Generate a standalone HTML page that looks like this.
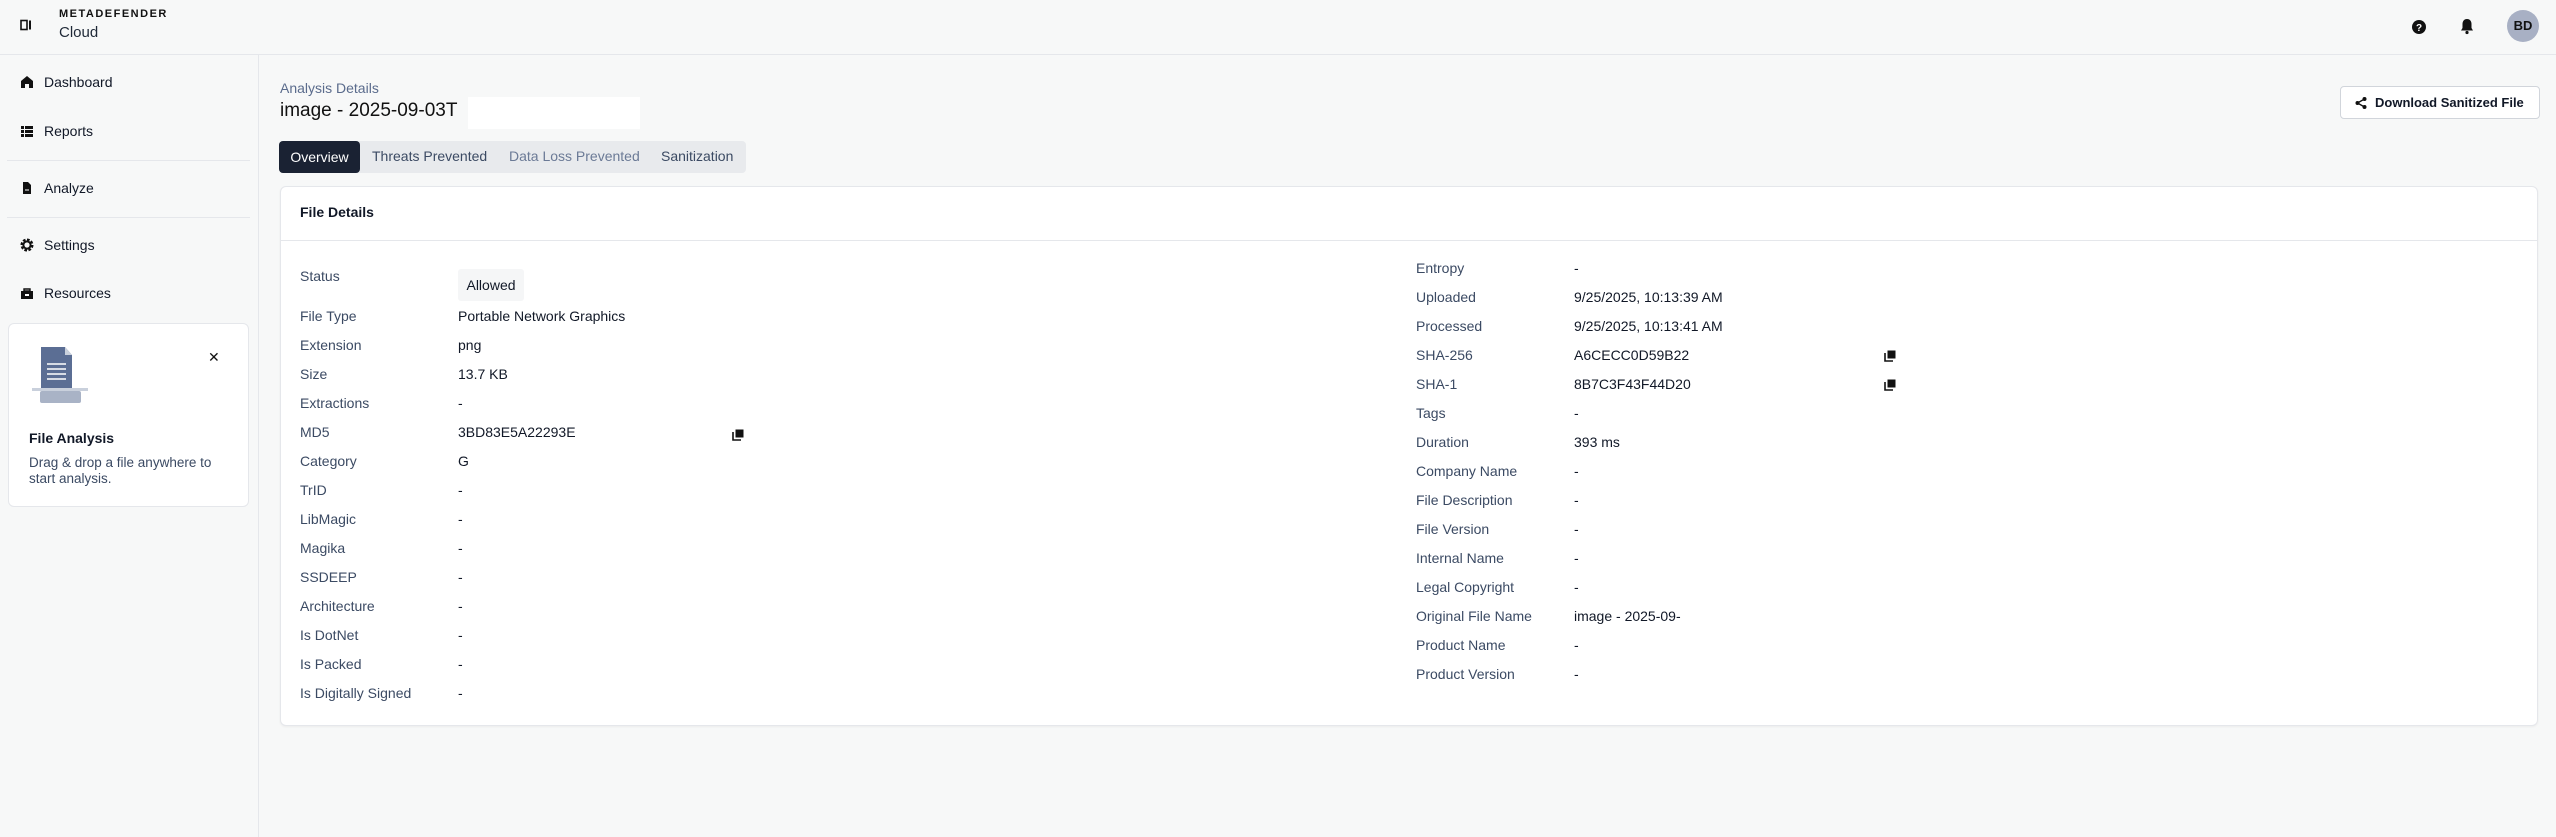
<!DOCTYPE html>
<html><head><meta charset="utf-8"><style>
*{box-sizing:border-box;margin:0;padding:0}
body{width:2556px;height:837px;background:#f7f8f8;font-family:"Liberation Sans",sans-serif;color:#111827;position:relative;overflow:hidden;font-size:14px}
.a{position:absolute}
.hdr{left:0;top:0;width:2556px;height:55px;border-bottom:1px solid #e5e7eb}
.side{left:0;top:55px;width:259px;height:782px;border-right:1px solid #e5e7eb}
.nav{left:20px;font-size:14px;color:#111827;display:flex;align-items:center;gap:10px}
.nav svg{width:14px;height:14px}
.div{left:7px;width:243px;height:1px;background:#e5e7eb}
.lbl{color:#3b4a63}
.val{color:#111827}
.card{left:280px;top:186px;width:2258px;height:540px;background:#fff;border:1px solid #e5e7eb;border-radius:6px;box-shadow:0 1px 2px rgba(0,0,0,.05)}
</style></head><body>
<div class="a hdr"></div>
<svg class="a" style="left:20px;top:19px" width="12" height="12" viewBox="0 0 12 12"><rect x="1" y="1.5" width="6" height="9" fill="none" stroke="#111" stroke-width="1.6"/><rect x="9" y="1.5" width="2" height="9" fill="#111"/></svg>
<div class="a" style="left:59px;top:8px;font-size:11px;font-weight:bold;letter-spacing:1.5px;color:#111">METADEFENDER</div>
<div class="a" style="left:59px;top:24px;font-size:15px;color:#1f2937">Cloud</div>
<svg class="a" style="left:2411px;top:19px" width="16" height="16" viewBox="0 0 16 16"><circle cx="8" cy="8" r="7" fill="#111"/><text x="8" y="12" font-size="10" font-weight="bold" text-anchor="middle" fill="#fff" font-family="Liberation Sans">?</text></svg>
<svg class="a" style="left:2459px;top:18px" width="16" height="17" viewBox="0 0 16 17"><path d="M8 1c-3 0-4.5 2.3-4.5 5v4L2 12.5h12L12.5 10V6C12.5 3.3 11 1 8 1z" fill="#111"/><circle cx="8" cy="14.5" r="1.6" fill="#111"/></svg>
<div class="a" style="left:2507px;top:10px;width:32px;height:32px;border-radius:50%;background:#a8b0c4;font-size:13px;font-weight:bold;color:#111;text-align:center;line-height:32px">BD</div>

<div class="a side"></div>
<div class="a nav" style="top:74px"><svg viewBox="0 0 14 14"><path d="M7 1L1 6v7h4V9h4v4h4V6z" fill="#111"/></svg>Dashboard</div>
<div class="a nav" style="top:123px"><svg viewBox="0 0 14 14"><path d="M1 2h3v3H1zM5 2h8v3H5zM1 6h3v3H1zM5 6h8v3H5zM1 10h3v3H1zM5 10h8v3H5z" fill="#111"/></svg>Reports</div>
<div class="a div" style="top:160px"></div>
<div class="a nav" style="top:180px"><svg viewBox="0 0 14 14"><path d="M3 1h5l3 3v9H3z" fill="#111"/><path d="M5 9h4" stroke="#fff"/></svg>Analyze</div>
<div class="a div" style="top:217px"></div>
<div class="a nav" style="top:237px"><svg viewBox="0 0 14 14"><circle cx="7" cy="7" r="5" fill="none" stroke="#111" stroke-width="3" stroke-dasharray="2.5 1.4"/><circle cx="7" cy="7" r="3.6" fill="none" stroke="#111" stroke-width="2"/></svg>Settings</div>
<div class="a nav" style="top:285px"><svg viewBox="0 0 14 14"><path d="M4 3h6v2H4z" fill="none" stroke="#111" stroke-width="1.4"/><rect x="1" y="5" width="12" height="8" fill="#111"/><rect x="5" y="8" width="4" height="2" fill="#fff"/></svg>Resources</div>

<div class="a" style="left:8px;top:323px;width:241px;height:184px;background:#fff;border:1px solid #e5e7eb;border-radius:6px"></div>
<svg class="a" style="left:32px;top:347px" width="56" height="56" viewBox="0 0 56 56"><path d="M9 0h24l7 8v33H9z" fill="#5b6e94"/><path d="M33 0l7 8h-7z" fill="#c9d0dc"/><path d="M15 17h19M15 22h19M15 27h19M15 32h19" stroke="#fff" stroke-width="1.6"/><rect x="0" y="41" width="56" height="3" fill="#c9d0dc"/><rect x="8" y="44" width="41" height="12" rx="2" fill="#a9b3c6"/></svg>
<div class="a" style="left:208px;top:349px;font-size:14px;color:#111">✕</div>
<div class="a" style="left:29px;top:430px;font-size:14px;font-weight:bold">File Analysis</div>
<div class="a" style="left:29px;top:455px;font-size:13.5px;color:#3b4a63;line-height:16px">Drag &amp; drop a file anywhere to<br>start analysis.</div>

<div class="a" style="left:280px;top:80px;font-size:14px;color:#5a6b8c">Analysis Details</div>
<div class="a" style="left:280px;top:100px;font-size:19px;font-weight:500;color:#111">image - 2025-09-03T</div>
<div class="a" style="left:468px;top:97px;width:172px;height:32px;background:#fff"></div>
<div class="a" style="left:2340px;top:86px;width:200px;height:33px;border:1px solid #d1d5db;border-radius:4px;background:#fff;font-size:13px;font-weight:bold;display:flex;align-items:center;padding-left:14px;gap:8px;white-space:nowrap"><svg width="12" height="12" viewBox="0 0 12 12"><circle cx="2.5" cy="6" r="2" fill="#111"/><circle cx="9.5" cy="2" r="2" fill="#111"/><circle cx="9.5" cy="10" r="2" fill="#111"/><path d="M2.5 6L9.5 2M2.5 6l7 4" stroke="#111" stroke-width="1.3"/></svg>Download Sanitized File</div>

<div class="a" style="left:279px;top:141px;width:467px;height:32px;background:#e8eaed;border-radius:4px"></div>
<div class="a" style="left:279px;top:141px;width:81px;height:32px;background:#1a2233;border-radius:4px;color:#fff;font-size:14px;text-align:center;line-height:32px">Overview</div>
<div class="a" style="left:372px;top:148px;font-size:14px;color:#3b4a63">Threats Prevented</div>
<div class="a" style="left:509px;top:148px;font-size:14px;color:#6b7a96">Data Loss Prevented</div>
<div class="a" style="left:661px;top:148px;font-size:14px;color:#3b4a63">Sanitization</div>

<div class="a card"></div>
<div class="a" style="left:280px;top:240px;width:2258px;height:1px;background:#e5e7eb"></div>
<div class="a" style="left:300px;top:204px;font-size:14px;font-weight:bold">File Details</div>

<div class="a lbl" style="left:300px;top:268px">Status</div>
<div class="a" style="left:458px;top:269px;width:66px;height:32px;background:#f5f6f7;border-radius:3px;text-align:center;line-height:32px">Allowed</div>
<div class="a lbl" style="left:300px;top:302px;line-height:29px">File Type<br>Extension<br>Size<br>Extractions<br>MD5<br>Category<br>TrID<br>LibMagic<br>Magika<br>SSDEEP<br>Architecture<br>Is DotNet<br>Is Packed<br>Is Digitally Signed</div>
<div class="a val" style="left:458px;top:302px;line-height:29px">Portable Network Graphics<br>png<br>13.7 KB<br>-<br>3BD83E5A22293E<br>G<br>-<br>-<br>-<br>-<br>-<br>-<br>-<br>-</div>

<div class="a lbl" style="left:1416px;top:254px;line-height:29px">Entropy<br>Uploaded<br>Processed<br>SHA-256<br>SHA-1<br>Tags<br>Duration<br>Company Name<br>File Description<br>File Version<br>Internal Name<br>Legal Copyright<br>Original File Name<br>Product Name<br>Product Version</div>
<div class="a val" style="left:1574px;top:254px;line-height:29px">-<br>9/25/2025, 10:13:39 AM<br>9/25/2025, 10:13:41 AM<br>A6CECC0D59B22<br>8B7C3F43F44D20<br>-<br>393 ms<br>-<br>-<br>-<br>-<br>-<br>image - 2025-09-<br>-<br>-</div>

<svg class="a" style="left:732px;top:429px" width="12" height="12" viewBox="0 0 12 12"><rect x="3.5" y="0.5" width="8" height="8" fill="#111"/><path d="M1 3v8h8" fill="none" stroke="#111" stroke-width="1.6"/></svg>
<svg class="a" style="left:1884px;top:350px" width="12" height="12" viewBox="0 0 12 12"><rect x="3.5" y="0.5" width="8" height="8" fill="#111"/><path d="M1 3v8h8" fill="none" stroke="#111" stroke-width="1.6"/></svg>
<svg class="a" style="left:1884px;top:379px" width="12" height="12" viewBox="0 0 12 12"><rect x="3.5" y="0.5" width="8" height="8" fill="#111"/><path d="M1 3v8h8" fill="none" stroke="#111" stroke-width="1.6"/></svg>
</body></html>
